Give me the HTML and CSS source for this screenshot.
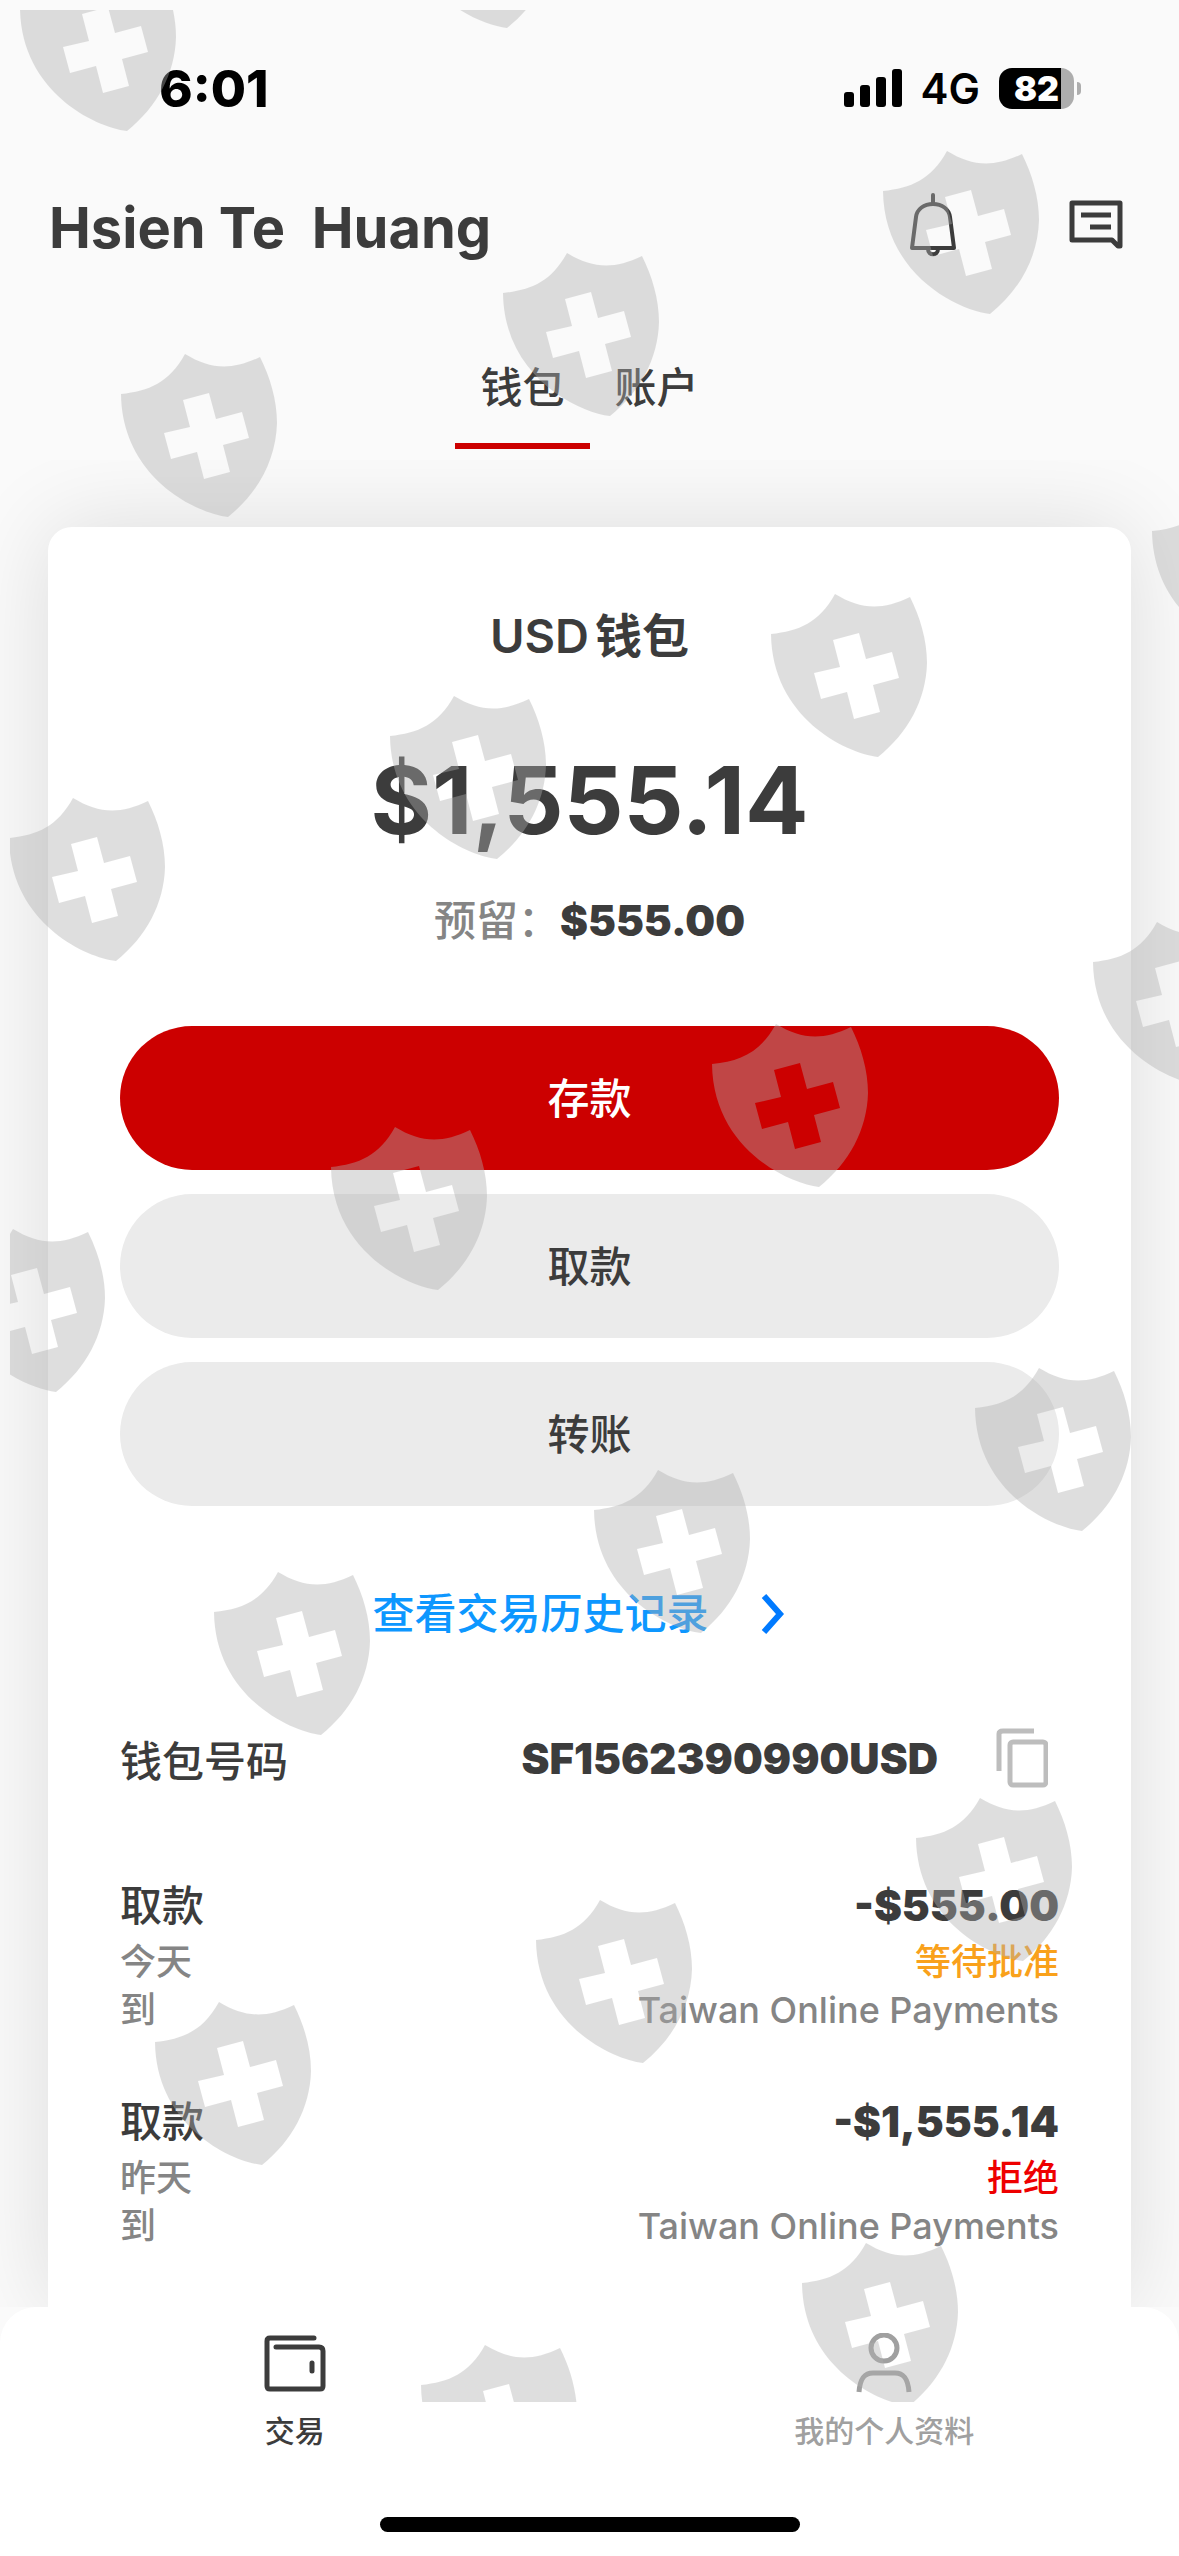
FILE: index.html
```html
<!DOCTYPE html>
<html lang="zh-CN">
<head>
    <meta charset="UTF-8">
    <meta name="viewport" content="width=device-width, initial-scale=1.0">
    <title>USD钱包</title>
    <link rel="stylesheet" href="styles.css">
</head>
<body>

<div class="status-bar">
    <span class="time">6:01</span>
    <div class="status-icons">
        <svg class="signal" width="58" height="38" viewBox="0 0 58 38">
            <rect x="0" y="23" width="10" height="15" rx="3"/>
            <rect x="16" y="16" width="10" height="22" rx="3"/>
            <rect x="32" y="8" width="10" height="30" rx="3"/>
            <rect x="48" y="0" width="10" height="38" rx="3"/>
        </svg>
        <span class="network">4G</span>
        <div class="battery"><span>82</span></div>
    </div>
</div>

<header class="header">
    <h1>Hsien Te&nbsp; Huang</h1>
    <div class="header-actions">
        <button type="button" aria-label="通知">
            <svg width="48" height="66" viewBox="0 0 48 66" fill="none" stroke="#3c3c3c" stroke-width="4" stroke-linecap="round" stroke-linejoin="round">
                <path d="M24 2v9"/>
                <path d="M3 55h42L41 24C40 16 33 11 24 11S8 16 7 24Z"/>
                <path d="M19 56c0 7 10 7 10 0"/>
            </svg>
        </button>
        <button type="button" aria-label="消息">
            <svg width="54" height="52" viewBox="0 0 54 52" fill="none" stroke="#3c3c3c" stroke-width="5">
                <path d="M3 3h48v43h-2l-6-6H3z" stroke-linejoin="round"/>
                <path d="M12 15h30M21 27h21"/>
            </svg>
        </button>
    </div>
</header>

<nav class="tabs">
    <a href="#wallet" class="tab active">钱包</a>
    <a href="#account" class="tab">账户</a>
</nav>

<main class="content">
    <section class="card" id="wallet">
        <h2><span>USD</span><span>钱包</span></h2>
        <p class="balance">$1,555.14</p>
        <p class="reserved">预留：<strong>$555.00</strong></p>

        <div class="buttons">
            <button type="button" class="btn btn-primary">存款</button>
            <button type="button" class="btn">取款</button>
            <button type="button" class="btn">转账</button>
        </div>

        <a href="#history" class="history">
            查看交易历史记录
            <svg width="24" height="40" viewBox="0 0 24 40" fill="none" stroke="#007aff" stroke-width="6">
                <path d="M3 2l16 18L3 38"/>
            </svg>
        </a>

        <div class="wallet-number">
            <span>钱包号码</span>
            <strong>SF1562390990USD</strong>
            <button type="button" aria-label="复制">
                <svg width="52" height="60" viewBox="0 0 52 60" fill="none" stroke="#bdbdbd" stroke-width="5">
                    <path d="M3 43V6q0-3 4-3h31"/>
                    <rect x="14" y="14" width="36" height="43" rx="3"/>
                </svg>
            </button>
        </div>

        <ul class="transactions">
            <li>
                <div class="tx-main"><span>取款</span><strong>-$555.00</strong></div>
                <div class="tx-line"><span>今天</span><span class="pending">等待批准</span></div>
                <div class="tx-line"><span>到</span><span>Taiwan Online Payments</span></div>
            </li>
            <li>
                <div class="tx-main"><span>取款</span><strong>-$1,555.14</strong></div>
                <div class="tx-line"><span>昨天</span><span class="declined">拒绝</span></div>
                <div class="tx-line"><span>到</span><span>Taiwan Online Payments</span></div>
            </li>
        </ul>
    </section>
</main>

<footer class="bottom">
    <nav class="bottom-nav">
        <a href="#trade" class="nav-item active">
            <svg width="62" height="60" viewBox="0 0 62 60" fill="none" stroke="currentColor" stroke-width="5" stroke-linecap="round">
                <path d="M50 5H6Q3 5 3 8V53Q3 56 6 56H56Q59 56 59 53V18Q59 14 55 14H12"/>
                <path d="M48 30v8"/>
            </svg>
            交易
        </a>
        <a href="#profile" class="nav-item">
            <svg width="62" height="60" viewBox="0 0 62 60" fill="none" stroke="currentColor" stroke-width="5">
                <circle cx="31" cy="15" r="13"/>
                <path d="M6 59C7 46 11 40 20 40H42C51 40 55 46 56 59"/>
            </svg>
            我的个人资料
        </a>
    </nav>
    <div class="home-indicator"></div>
</footer>

<!-- watermark -->
<svg class="watermark" aria-hidden="true">
    <defs>
        <path id="shield" fill-rule="evenodd" d="M0 40C28 37 48 29 64 0C89 15 110 17 139 3C149 23 156 46 156 69C155 106 137 139 107 163C74 159 1 123 0 40Z
            M62 46L88 39L95 65L121 58L128 84L102 91L109 118L83 125L76 98L50 105L43 79L69 73Z"/>
    </defs>
    <use href="#shield" x="10" y="-42"/>
    <use href="#shield" x="390" y="-145"/>
    <use href="#shield" x="873" y="141"/>
    <use href="#shield" x="493" y="243"/>
    <use href="#shield" x="111" y="344"/>
    <use href="#shield" x="1142" y="481"/>
    <use href="#shield" x="761" y="584"/>
    <use href="#shield" x="380" y="686"/>
    <use href="#shield" x="-1" y="788"/>
    <use href="#shield" x="1083" y="912"/>
    <use href="#shield" x="702" y="1014"/>
    <use href="#shield" x="321" y="1117"/>
    <use href="#shield" x="-61" y="1219"/>
    <use href="#shield" x="965" y="1358"/>
    <use href="#shield" x="584" y="1460"/>
    <use href="#shield" x="204" y="1562"/>
    <use href="#shield" x="906" y="1788"/>
    <use href="#shield" x="526" y="1890"/>
    <use href="#shield" x="145" y="1992"/>
    <use href="#shield" x="792" y="2233"/>
    <use href="#shield" x="411" y="2335"/>
</svg>

</body>
</html>
```
FILE: styles.css
```css
* {
    box-sizing: border-box;
}
body {
    position: relative;
    display: flex;
    flex-direction: column;
    min-height: 100vh;
    margin: 0;
    background-color: #fafafa;
    color: #3c3c3c;
    font-family: Inter, "Noto Sans CJK SC", sans-serif;
    font-size: 42px;
    font-weight: 500;
}
h1, h2, p, ul {
    margin: 0;
    padding: 0;
}
a {
    color: inherit;
    text-decoration: none;
}
button {
    padding: 0;
    border: none;
    background: none;
    color: inherit;
    font: inherit;
    cursor: pointer;
}
svg {
    display: block;
}
strong {
    font-weight: 900;
}

/* Status bar */
.status-bar {
    display: flex;
    align-items: center;
    justify-content: space-between;
    height: 176px;
    padding: 0 98px 0 159px;
    color: #000;
}
.time {
    font-size: 51px;
    font-weight: 800;
}
.status-icons {
    display: flex;
    align-items: center;
    gap: 19px;
}
.network {
    font-size: 42px;
    font-weight: 600;
}
.battery {
    position: relative;
    width: 75px;
    height: 41px;
    margin-right: 7px;
    border-radius: 13px;
    background: linear-gradient(to right, #000 62px, #adadad 62px);
    color: #fff;
    font-size: 34px;
    font-weight: 900;
    line-height: 41px;
    text-align: center;
}
.battery::after {
    content: "";
    position: absolute;
    top: 14px;
    right: -7px;
    width: 4px;
    height: 13px;
    border-radius: 0 6px 6px 0;
    background: #adadad;
}

/* Header */
.header {
    display: flex;
    align-items: center;
    justify-content: space-between;
    height: 104px;
    padding: 0 56px 0 49px;
}
.header h1 {
    font-size: 56px;
    font-weight: 700;
}
.header-actions {
    display: flex;
    align-items: center;
    gap: 112px;
    padding-bottom: 4px;
}

/* Tabs */
.tabs {
    display: flex;
    justify-content: center;
    padding-top: 84px;
    margin-bottom: 11px;
}
.tab {
    padding: 0 25px 31px;
    border-bottom: 6px solid transparent;
    line-height: 48px;
}
.tab.active {
    border-color: #c00;
}

/* Wallet card */
.content {
    display: flex;
    flex: 1;
    flex-direction: column;
    padding: 67px 48px 0;
    overflow: hidden;
}
.card {
    flex: 1;
    padding: 79px 72px 48px;
    border-radius: 24px 24px 0 0;
    background-color: #fff;
    box-shadow: 0 0 90px rgba(0, 0, 0, 0.12);
}
.card h2 {
    display: flex;
    justify-content: center;
    gap: 6px;
    font-size: 47px;
    font-weight: 600;
    line-height: 60px;
}
.balance {
    margin-top: 78px;
    font-size: 94px;
    font-weight: 700;
    line-height: 112px;
    text-align: center;
}
.reserved {
    margin-top: 39px;
    color: #858585;
    line-height: 52px;
    text-align: center;
}
.reserved strong {
    color: #3c3c3c;
}
.buttons {
    display: flex;
    flex-direction: column;
    gap: 24px;
    margin-top: 79px;
}
.btn {
    height: 144px;
    padding-bottom: 6px;
    border-radius: 72px;
    background-color: #ebebeb;
}
.btn-primary {
    background-color: #c00;
    color: #fff;
}
.history {
    display: flex;
    align-items: center;
    justify-content: center;
    gap: 52px;
    margin-top: 84px;
    padding-right: 22px;
    color: #0d97ff;
    line-height: 48px;
}
.wallet-number {
    display: flex;
    align-items: center;
    height: 60px;
    margin-top: 90px;
    padding-right: 11px;
}
.wallet-number strong {
    margin: 0 58px 0 auto;
}
.transactions {
    display: flex;
    flex-direction: column;
    gap: 56px;
    margin-top: 86px;
    list-style: none;
}
.tx-main,
.tx-line {
    display: flex;
    justify-content: space-between;
}
.tx-main {
    line-height: 64px;
}
.tx-line {
    color: #858585;
    font-size: 36px;
    line-height: 48px;
}
.pending {
    color: #f9a11b;
}
.declined {
    color: #ee0000;
}

/* Bottom navigation */
.bottom {
    padding: 26px 0 24px;
    border-radius: 36px 36px 0 0;
    background-color: #fff;
}
.bottom-nav {
    display: flex;
}
.nav-item {
    display: flex;
    flex: 1;
    flex-direction: column;
    align-items: center;
    gap: 18px;
    color: #a0a0a0;
    font-size: 30px;
    line-height: 40px;
}
.nav-item.active {
    color: #3c3c3c;
}
.home-indicator {
    width: 420px;
    height: 15px;
    margin: 66px auto 0;
    border-radius: 8px;
    background-color: #000;
}

.watermark {
    position: absolute;
    top: 10px;
    left: 10px;
    width: calc(100% - 10px);
    height: 2392px;
    fill: #afafaf;
    opacity: 0.4;
    overflow: hidden;
    pointer-events: none;
}
```
